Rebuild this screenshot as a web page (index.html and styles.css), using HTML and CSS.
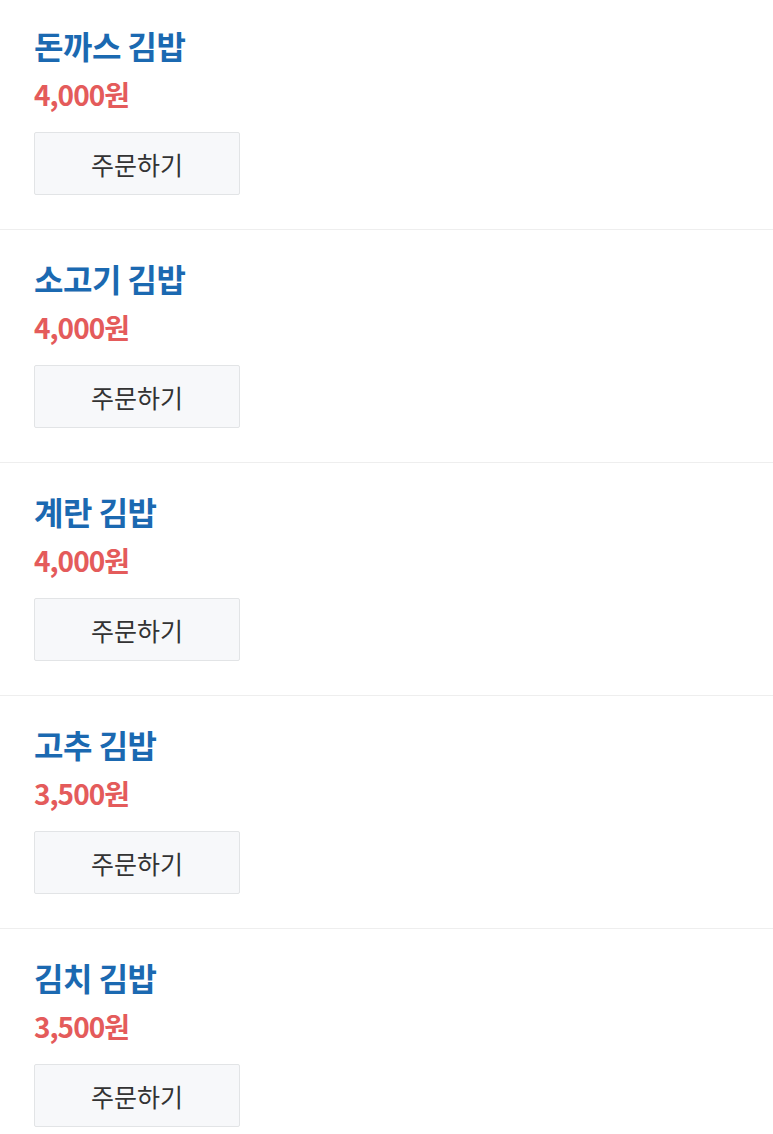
FILE: index.html
```html
<!DOCTYPE html>
<html>
<head>
<title>김밥 메뉴</title>
<link rel="stylesheet" href="styles.css">
</head>
<body>

<div class="menu-list">
    <div class="menu-item">
        <div class="menu-name">돈까스 김밥</div>
        <div class="menu-price">4,000원</div>
        <button class="order-btn">주문하기</button>
    </div>
    <div class="menu-item">
        <div class="menu-name">소고기 김밥</div>
        <div class="menu-price">4,000원</div>
        <button class="order-btn">주문하기</button>
    </div>
    <div class="menu-item">
        <div class="menu-name">계란 김밥</div>
        <div class="menu-price">4,000원</div>
        <button class="order-btn">주문하기</button>
    </div>
    <div class="menu-item">
        <div class="menu-name">고추 김밥</div>
        <div class="menu-price">3,500원</div>
        <button class="order-btn">주문하기</button>
    </div>
    <div class="menu-item">
        <div class="menu-name">김치 김밥</div>
        <div class="menu-price">3,500원</div>
        <button class="order-btn">주문하기</button>
    </div>
</div>

</body>
</html>
```

FILE: styles.css
```css
body {
    margin: 0;
    font-family: "Noto Sans CJK KR", "Noto Sans", sans-serif;
    background-color: #fff;
    overflow: hidden;
}
.menu-list {
    margin-top: -3px;
}
.menu-item {
    display: flex;
    flex-direction: column;
    align-items: flex-start;
    box-sizing: border-box;
    height: 233px;
    padding: 26px 34px 0;
    border-bottom: 1px solid #eeeeee;
}
.menu-name {
    font-size: 32px;
    font-weight: bold;
    line-height: 44px;
    letter-spacing: -0.5px;
    color: #1b69b1;
}
.menu-price {
    margin-top: 9px;
    font-size: 28px;
    font-weight: bold;
    line-height: 36px;
    letter-spacing: -1px;
    color: #e45b5b;
}
.order-btn {
    margin-top: 20px;
    width: 206px;
    height: 63px;
    font-family: inherit;
    font-size: 25px;
    color: #333;
    background-color: #f7f8fa;
    border: 1px solid #e2e4e6;
    border-radius: 2px;
    cursor: pointer;
}
```
